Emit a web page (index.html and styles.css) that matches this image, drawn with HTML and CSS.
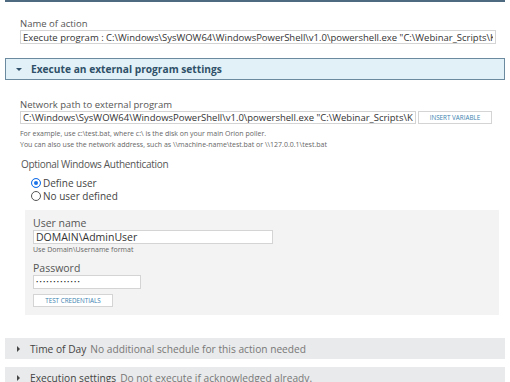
FILE: index.html
```html
<!DOCTYPE html>
<html lang="en">
<head>
    <meta charset="UTF-8">
    <title>Execute an external program</title>
    <link rel="stylesheet" href="styles.css">
</head>
<body>
    <div class="prev-panel"></div>

    <div class="field top-field">
        <label class="lbl">Name of action</label>
        <input type="text" class="input wide" value='Execute program : C:\Windows\SysWOW64\WindowsPowerShell\v1.0\powershell.exe "C:\Webinar_Scripts\Kill_Process.ps1"'>
    </div>

    <div class="section-head">
        <span class="arrow-down"></span>
        <span>Execute an external program settings</span>
    </div>

    <div class="section-body">
        <div class="field">
            <label class="lbl">Network path to external program</label>
            <div class="row">
                <input type="text" class="input path" value='C:\Windows\SysWOW64\WindowsPowerShell\v1.0\powershell.exe "C:\Webinar_Scripts\Kill_Process.ps1"'>
                <button class="btn insert">INSERT VARIABLE</button>
            </div>
            <p class="hint">For example, use c:\test.bat, where c:\ is the disk on your main Orion poller.</p>
            <p class="hint">You can also use the network address, such as \\machine-name\test.bat or \\127.0.0.1\test.bat</p>
        </div>

        <div class="auth">
            <div class="auth-title">Optional Windows Authentication</div>
            <div class="radios">
                <label class="radio"><span class="dot checked"></span>Define user</label>
                <label class="radio"><span class="dot"></span>No user defined</label>
            </div>

            <div class="cred-box">
                <label class="lbl big">User name</label>
                <input type="text" class="input user" value="DOMAIN\AdminUser">
                <p class="hint">Use Domain\Username format</p>
                <label class="lbl big pass-lbl">Password</label>
                <input type="password" class="input pass" value="password1234!">
                <button class="btn test">TEST CREDENTIALS</button>
            </div>
        </div>
    </div>

    <div class="collapsed">
        <span class="arrow-right"></span>
        <span class="c-title">Time of Day</span>
        <span class="c-desc">No additional schedule for this action needed</span>
    </div>
    <div class="collapsed">
        <span class="arrow-right"></span>
        <span class="c-title">Execution settings</span>
        <span class="c-desc">Do not execute if acknowledged already.</span>
    </div>
</body>
</html>
```
FILE: styles.css
```css
body {
    margin: 0;
    padding: 0 5px;
    font-family: "Open Sans", Arial, sans-serif;
    color: #444;
    background-color: #fff;
    width: 500px;
}

.prev-panel {
    height: 0;
    border: 1px solid #4d6a80;
    border-top: none;
    border-bottom-width: 2px;
}

.field {
    padding: 0 7px 0 15px;
}

.top-field {
    padding-top: 15px;
    padding-bottom: 14px;
}

.lbl {
    display: block;
    font-size: 9.5px;
    line-height: 13px;
    color: #555;
}

.lbl.big {
    font-size: 10.5px;
    line-height: 13px;
}

.input {
    display: block;
    box-sizing: border-box;
    height: 14px;
    margin: 0;
    border: 1px solid #d4d4d4;
    border-radius: 0;
    background-color: #fff;
    font-family: "Open Sans", Arial, sans-serif;
    font-size: 9.5px;
    line-height: 12px;
    padding: 0 2px;
    color: #333;
    outline: none;
}

.input.wide {
    width: 476px;
}

.section-head {
    display: flex;
    align-items: center;
    height: 20px;
    border: 1px solid #6b8aa0;
    background-color: #e2f0f7;
    font-size: 10.2px;
    font-weight: bold;
    color: #2f5068;
}

.arrow-down {
    width: 0;
    height: 0;
    margin: 0 9px 0 10px;
    border-left: 3px solid transparent;
    border-right: 3px solid transparent;
    border-top: 3px solid #2f5068;
}

.section-body {
    padding-top: 18px;
}

.row {
    display: flex;
    gap: 2px;
}

.input.path {
    flex-shrink: 0;
    width: 396px;
    height: 13px;
    line-height: 11px;
}

.btn {
    box-sizing: border-box;
    flex-shrink: 0;
    height: 13px;
    padding: 0;
    border: 1px solid #d4d4d4;
    background-color: #fff;
    font-family: "Open Sans", Arial, sans-serif;
    font-size: 6.3px;
    line-height: 11px;
    color: #3b7fb0;
    white-space: nowrap;
}

.btn.insert {
    width: 74px;
}

.hint {
    margin: 0;
    font-size: 7px;
    line-height: 11px;
    color: #666;
}

.row + .hint {
    margin-top: 4px;
}

.auth {
    padding-left: 16px;
}

.auth-title {
    margin-top: 7px;
    font-size: 10px;
    line-height: 14px;
    letter-spacing: -0.3px;
    color: #555;
}

.radios {
    margin: 5px 0 0 10px;
}

.radio {
    display: flex;
    align-items: center;
    height: 13px;
    font-size: 10px;
    color: #444;
}

.dot {
    box-sizing: border-box;
    width: 10px;
    height: 10px;
    margin-right: 2px;
    border: 1px solid #555;
    border-radius: 50%;
    background-color: #fff;
}

.dot.checked {
    border-color: #1a73e8;
    box-shadow: inset 0 0 0 2px #fff;
    background-color: #1a73e8;
}

.cred-box {
    margin: 8px 6px 0 4px;
    padding: 7px 8px 8px 8px;
    background-color: #f3f3f3;
}

.input.user {
    width: 240px;
    font-size: 10.5px;
}

.input.pass {
    width: 108px;
    font-size: 6px;
    letter-spacing: 1.2px;
    color: #222;
}

.pass-lbl {
    margin-top: 7px;
}

.btn.test {
    display: block;
    margin-top: 5px;
    width: 80px;
}

.collapsed {
    display: flex;
    align-items: center;
    height: 21px;
    margin-top: 23px;
    background-color: #e9eaeb;
    font-size: 10.2px;
}

.collapsed + .collapsed {
    margin-top: 8px;
}

.arrow-right {
    width: 0;
    height: 0;
    margin: 0 10px 0 12px;
    border-top: 3px solid transparent;
    border-bottom: 3px solid transparent;
    border-left: 3px solid #444;
}

.c-title {
    color: #444;
    margin-right: 4px;
}

.c-desc {
    color: #777;
}
```
